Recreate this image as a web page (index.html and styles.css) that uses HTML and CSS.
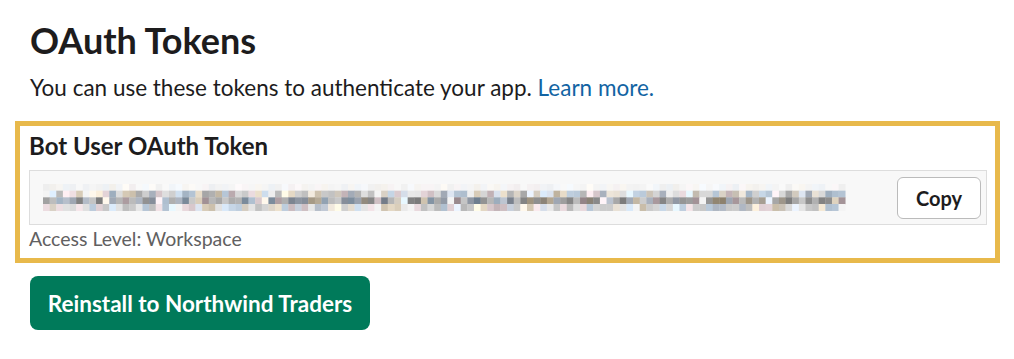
FILE: index.html
```html
<!DOCTYPE html>
<html>
<head>
<meta charset="utf-8">
<link rel="stylesheet" href="styles.css">
</head>
<body>
<main class="page">
  <h1 class="title">OAuth Tokens</h1>
  <p class="intro">You can use these tokens to authenticate your app. <a class="link" href="#">Learn more.</a></p>
  <section class="token-box">
    <h2 class="token-label">Bot User OAuth Token</h2>
    <div class="token-field">
      <div class="token-blur" id="blur"></div>
      <button class="copy-btn">Copy</button>
    </div>
    <div class="access">Access Level: Workspace</div>
  </section>
  <button class="reinstall">Reinstall to Northwind Traders</button>
</main>
<script src="script.js"></script>
</body>
</html>
```

FILE: styles.css
```css
* { box-sizing: border-box; }
html, body { margin: 0; background: #fff; }
body {
  font-family: Lato, "Noto Sans", sans-serif;
  color: #1d1c1d;
}
.page {
  padding: 18px 0 0 30px;
  width: 1014px;
}
.title {
  margin: 0;
  font-size: 36px;
  font-weight: 700;
  line-height: 44px;
}
.intro {
  margin: 11px 0 0;
  font-size: 22.5px;
  line-height: 30px;
}
.link { color: #1264a3; text-decoration: none; }
.token-box {
  margin: 18px 0 0 -15px;
  width: 985px;
  border: 5px solid #e8b94b;
  padding: 5px 8px 7px 9px;
}
.token-label {
  margin: 0;
  font-size: 24px;
  font-weight: 700;
  line-height: 30px;
}
.token-field {
  margin-top: 9px;
  height: 55px;
  background: #f8f8f8;
  border: 1px solid #dddddd;
  display: flex;
  align-items: center;
  justify-content: space-between;
  padding: 0 5px 0 13px;
}
.token-blur { height: 27px; width: 803px; }
.token-blur svg { display: block; }
.copy-btn {
  width: 84px;
  height: 42px;
  border: 1px solid #bbbbbb;
  border-radius: 6px;
  background: #fff;
  font-family: Lato, sans-serif;
  font-weight: 700;
  font-size: 20px;
  color: #1d1c1d;
  padding: 0;
}
.access {
  margin-top: 2px;
  font-size: 19.5px;
  line-height: 24px;
  color: #616061;
}
.reinstall {
  display: block;
  margin-top: 13px;
  height: 54px;
  width: 340px;
  border: 0;
  border-radius: 8px;
  background: #007a5a;
  color: #fff;
  font-family: Lato, sans-serif;
  font-weight: 700;
  font-size: 22.5px;
  padding: 0;
}
```

FILE: script.js
```js
(function () {
  var el = document.getElementById('blur');
  var cols = 121, rows = 4, s = 6.63, h = 6.67;
  var seed = 11;
  function rnd() { seed = (seed * 16807) % 2147483647; return (seed - 1) / 2147483646; }
  var tints = [[0,0,0],[0,0,0],[0,0,0],[6,2,-4],[-4,0,6],[-6,2,10],[8,0,2],[10,4,-6]];
  var out = '<svg xmlns="http://www.w3.org/2000/svg" width="803" height="27" viewBox="0 0 803 27">';
  for (var r = 0; r < rows; r++) {
    for (var c = 0; c < cols; c++) {
      var base;
      if (r === 0) base = 238 + rnd() * 12;
      else if (r === 1) base = 165 + rnd() * 75;
      else if (r === 2) base = 120 + rnd() * 85;
      else base = 180 + rnd() * 55;
      if (rnd() < 0.08) base = 244;
      var t = tints[Math.floor(rnd() * tints.length)];
      var k = r === 0 ? 0.5 : 2;
      var rr = Math.max(0, Math.min(255, Math.round(base + t[0] * k)));
      var gg = Math.max(0, Math.min(255, Math.round(base + t[1] * k)));
      var bb = Math.max(0, Math.min(255, Math.round(base + t[2] * k)));
      out += '<rect x="' + (c * s).toFixed(2) + '" y="' + (r * h).toFixed(2) + '" width="' + (s + 0.3).toFixed(2) + '" height="' + (h + 0.3).toFixed(2) + '" fill="rgb(' + rr + ',' + gg + ',' + bb + ')"/>';
    }
  }
  out += '</svg>';
  el.innerHTML = out;
})();
```
